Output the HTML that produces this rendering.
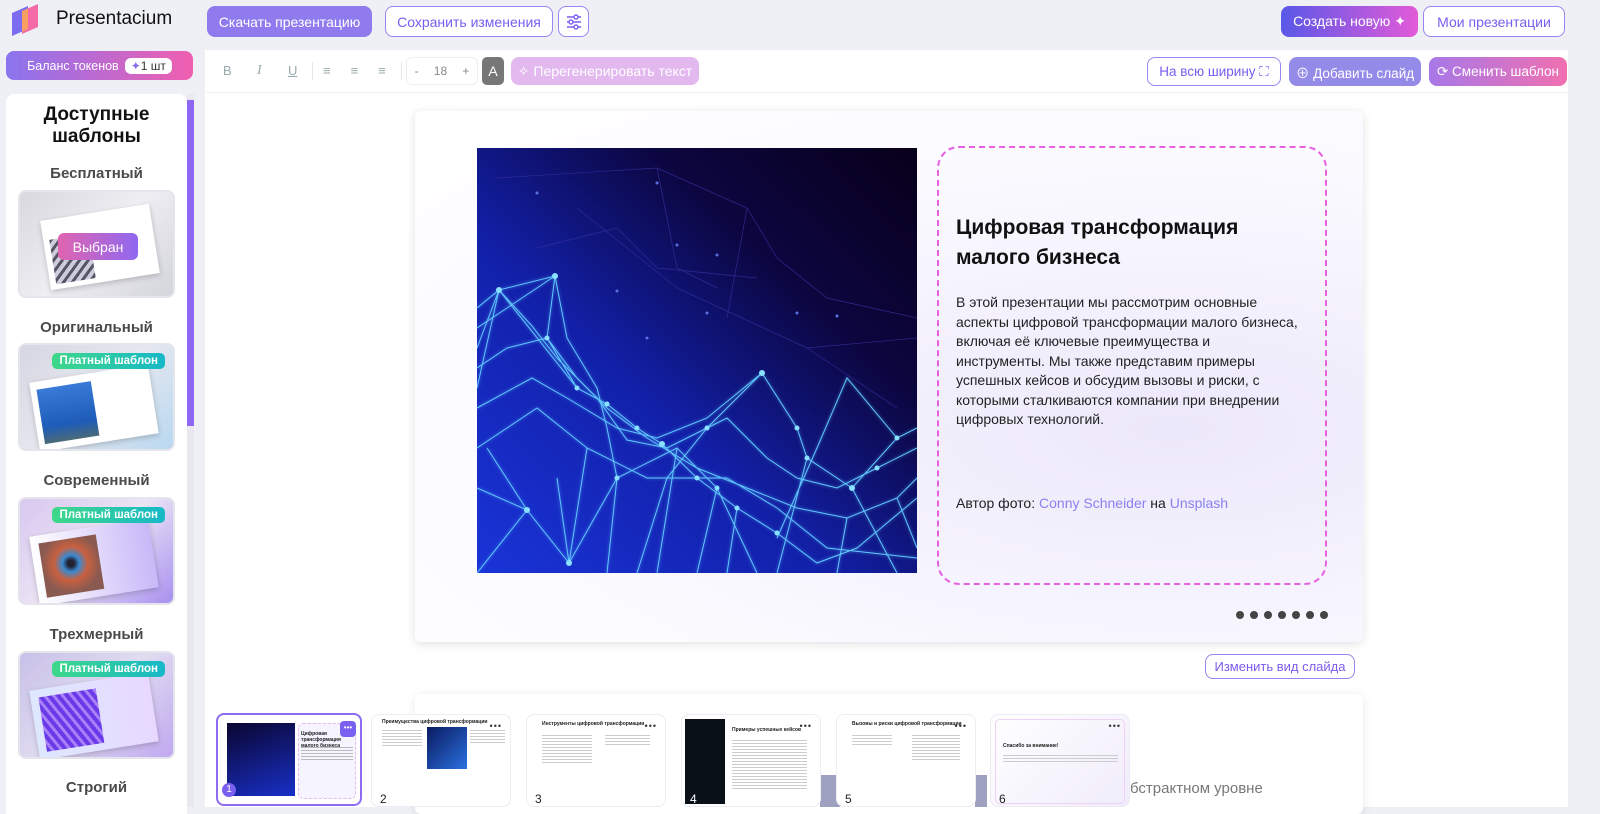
<!DOCTYPE html>
<html><head><meta charset="utf-8">
<style>
*{box-sizing:border-box;margin:0;padding:0}
body{width:1600px;height:807px;overflow:hidden;background:#eef0f6;font-family:"Liberation Sans","Noto Sans CJK SC",sans-serif;position:relative;color:#222}
.abs{position:absolute}
.btn{position:absolute;border-radius:8px;font-size:14px;display:flex;align-items:center;justify-content:center;white-space:nowrap}
.out{border:1.5px solid #9a85f0;color:#7a5cf0;background:#fff}
.tb{color:#9aa;font-size:13px}
.tname{position:absolute;left:6px;width:181px;text-align:center;font-weight:bold;font-size:15px;color:#4a4a4a}
.tcard{position:absolute;left:18px;width:157px;height:108px;border:2px solid #e4e4ec;border-radius:8px;overflow:hidden}
.paid{position:absolute;right:8px;top:8px;background:linear-gradient(90deg,#3fd88a,#17b8c8);color:#fff;font-size:11.5px;padding:2px 7px;border-radius:5px;font-weight:bold}
.th{position:absolute;top:714px;width:140px;height:93px;background:#fff;border:1px solid #ececf2;border-radius:8px;overflow:hidden}
.th .n{position:absolute;left:8px;bottom:0;font-size:12px;color:#222}
.th .d{position:absolute;right:8px;top:6px;font-size:9px;color:#333;letter-spacing:1px}
.ln{position:absolute;height:1.5px;background:#ccc}
</style></head><body>
<svg class="abs" style="left:6px;top:3px" width="38" height="36" viewBox="0 0 38 36"><path d="M6 10 L22 3 L22 26 L6 33Z" fill="#7b6cf0"/><path d="M16 8 L32 1 L32 24 L16 31Z" fill="#f55ca0" opacity=".9"/><path d="M16 8 L22 5.5 L22 26 L16 28.5Z" fill="#f7a060"/></svg>
<div class="abs" style="left:56px;top:8px;font-size:19px;color:#111">Presentacium</div>
<div class="btn" style="left:207px;top:6px;width:165px;height:31px;background:#8f7bee;color:#fff">Скачать презентацию</div>
<div class="btn out" style="left:385px;top:6px;width:168px;height:31px">Сохранить изменения</div>
<div class="btn out" style="left:558px;top:6px;width:31px;height:31px"><svg width="18" height="18" viewBox="0 0 18 18" fill="none" stroke="#7a5cf0" stroke-width="1.4"><path d="M2 4h14M2 9h14M2 14h14"/><circle cx="11" cy="4" r="2" fill="#fff"/><circle cx="6" cy="9" r="2" fill="#fff"/><circle cx="11" cy="14" r="2" fill="#fff"/></svg></div>
<div class="btn" style="left:1281px;top:6px;width:137px;height:31px;background:linear-gradient(90deg,#5a58e8,#e25ad8);color:#fff">Создать новую ✦</div>
<div class="btn out" style="left:1423px;top:6px;width:142px;height:31px">Мои презентации</div>

<div class="btn" style="left:6px;top:51px;width:187px;height:29px;background:linear-gradient(90deg,#8b74ee,#f05fb0);color:#fff;font-size:12.5px">Баланс токенов <span style="background:#fff;color:#333;border-radius:6px;padding:1px 6px;margin-left:6px;font-size:12px"><span style="color:#8b6cf0">✦</span>1 шт</span></div>
<div class="abs" style="left:6px;top:94px;width:181px;height:720px;background:#fff;border-radius:8px 8px 0 0"></div>
<div class="abs" style="left:187px;top:94px;width:7px;height:713px;background:#e8e8ee"></div>
<div class="abs" style="left:187px;top:100px;width:7px;height:326px;background:#8e68f4"></div>
<div class="abs" style="left:6px;top:104px;width:181px;text-align:center;font-size:19px;font-weight:bold;line-height:22px;color:#111">Доступные<br>шаблоны</div>
<div class="tname" style="top:165px">Бесплатный</div>
<div class="tcard" style="top:190px;background:linear-gradient(135deg,#d8d8de,#eeeef3 50%,#d4d4dc)">
 <div class="abs" style="left:25px;top:20px;width:110px;height:70px;background:#fff;transform:rotate(-9deg);box-shadow:0 2px 6px rgba(0,0,0,.2)"><div class="abs" style="left:6px;top:20px;width:40px;height:45px;background:repeating-linear-gradient(135deg,#556 0 3px,#ccd 3px 7px)"></div></div>
 <div class="abs" style="left:38px;top:41px;width:80px;height:27px;border-radius:6px;background:linear-gradient(90deg,#e064b0,#9068f0);color:#fff;font-size:14px;display:flex;align-items:center;justify-content:center">Выбран</div>
</div>
<div class="tname" style="top:319px">Оригинальный</div>
<div class="tcard" style="top:343px;background:linear-gradient(135deg,#d6d6e2,#e6e8f0 50%,#b8d8f0)">
 <div class="abs" style="left:14px;top:28px;width:120px;height:70px;background:#fff;transform:rotate(-9deg);box-shadow:0 2px 6px rgba(0,0,0,.2)"><div class="abs" style="left:6px;top:8px;width:55px;height:55px;background:linear-gradient(#3a7ad8,#1e5cb8 70%,#4a6a78)"></div></div>
 <div class="paid">Платный шаблон</div>
</div>
<div class="tname" style="top:472px">Современный</div>
<div class="tcard" style="top:497px;background:linear-gradient(135deg,#d8c8f0,#ece4f4 50%,#a890f0)">
 <div class="abs" style="left:14px;top:28px;width:120px;height:70px;background:linear-gradient(90deg,#fff,#c8b8f8);transform:rotate(-9deg);box-shadow:0 2px 6px rgba(0,0,0,.2)"><div class="abs" style="left:8px;top:8px;width:58px;height:55px;background:radial-gradient(circle at 50% 45%,#223 8%,#3a8ad0 20%,#c86040 40%,#8a5a50 70%)"></div></div>
 <div class="paid">Платный шаблон</div>
</div>
<div class="tname" style="top:626px">Трехмерный</div>
<div class="tcard" style="top:651px;background:linear-gradient(135deg,#c8c0e8,#e0dcf0 50%,#c0a8f0)">
 <div class="abs" style="left:14px;top:28px;width:120px;height:70px;background:linear-gradient(90deg,#dde8ff,#e8d8ff);transform:rotate(-9deg);box-shadow:0 2px 6px rgba(0,0,0,.2)"><div class="abs" style="left:8px;top:8px;width:58px;height:55px;background:repeating-linear-gradient(60deg,#6a3ae8 0 4px,#a880f8 4px 7px)"></div></div>
 <div class="paid">Платный шаблон</div>
</div>
<div class="tname" style="top:779px">Строгий</div>

<div class="abs" style="left:205px;top:50px;width:1363px;height:757px;background:#fff"></div>
<div class="abs" style="left:205px;top:92px;width:1363px;height:1px;background:#f0f0f4"></div>
<div class="abs tb" style="left:223px;top:63px">B</div>
<div class="abs tb" style="left:257px;top:63px;font-style:italic;font-family:'Liberation Serif',serif;font-size:14px">I</div>
<div class="abs tb" style="left:288px;top:63px;text-decoration:underline">U</div>
<div class="abs" style="left:312px;top:62px;width:1px;height:18px;background:#e6e6ea"></div>
<div class="abs tb" style="left:323px;top:63px;letter-spacing:20px">≡≡≡</div>
<div class="abs" style="left:401px;top:62px;width:1px;height:18px;background:#e6e6ea"></div>
<div class="abs" style="left:406px;top:57px;width:72px;height:28px;border:1px solid #eee;border-radius:6px;font-size:12px;color:#888;display:flex;justify-content:space-around;align-items:center"><span>-</span><span>18</span><span>+</span></div>
<div class="btn" style="left:482px;top:57px;width:22px;height:28px;border-radius:5px;background:#777;color:#fff;font-size:14px">A</div>
<div class="btn" style="left:511px;top:57px;width:188px;height:28px;background:#e2b8ee;color:#fff;font-size:14px">✧ Перегенерировать текст</div>
<div class="btn out" style="left:1147px;top:57px;width:134px;height:29px;font-size:13.5px">На всю ширину ⛶</div>
<div class="btn" style="left:1289px;top:57px;width:132px;height:29px;background:#948ae8;color:#fff;font-size:13.5px">⊕ Добавить слайд</div>
<div class="btn" style="left:1429px;top:57px;width:138px;height:29px;background:linear-gradient(90deg,#a878e8,#f070b0);color:#fff;font-size:13.5px">⟳ Сменить шаблон</div>

<div class="abs" style="left:415px;top:111px;width:948px;height:531px;border-radius:6px;background:radial-gradient(ellipse at 80% 60%,#ece8fb,#fbfaff 60%,#fff);box-shadow:0 2px 10px rgba(0,0,0,.12)"></div>
<svg class="abs" style="left:477px;top:148px" width="440" height="425" viewBox="0 0 440 425">
<defs><linearGradient id="g" x1="1" y1="0" x2="0" y2="1"><stop offset="0" stop-color="#08001a"/><stop offset=".3" stop-color="#0c0640"/><stop offset=".6" stop-color="#1220a8"/><stop offset="1" stop-color="#1a34d8"/></linearGradient>
<filter id="gl"><feGaussianBlur stdDeviation="1.5"/></filter></defs>
<rect width="440" height="425" fill="url(#g)"/>
<g stroke="#3a30a0" stroke-width=".7" fill="none" opacity=".8"><path d="M20 30 L180 20 L270 60 L300 110 L350 150 L440 170 M60 100 L140 80 L180 120 L280 130 M100 60 L200 140 L330 200 L440 190 M180 20 L200 120 L240 140 M270 60 L250 170 M330 200 L420 260"/></g>
<g id="net" stroke="#60c8ff" stroke-width="1" fill="none">
<path d="M0 160 L22 142 L78 128 L70 190 L100 240 L130 256 L160 280 L185 296 L220 330 L260 360 L300 385 L340 415 L380 400 L440 350"/>
<path d="M22 142 L55 178 L80 210 L120 250 L150 292 L190 300 L230 280 L250 270 L290 310 L320 330 L360 340 L400 320 L440 300"/>
<path d="M0 220 L30 200 L70 190 L100 230 L130 260 L170 290 L220 320 L270 340 L320 360 L370 370 L420 350 L440 330"/>
<path d="M0 260 L55 230 L90 250 L140 280 L180 290 L230 270 L285 225 L320 280 L330 310 L375 340 L420 290 L440 280"/>
<path d="M78 128 L90 190 L120 240 L130 280 L140 330 L130 425 M22 142 L0 200 M50 362 L0 425 M50 362 L92 415 L140 330 L200 300 L240 340 L280 425 M240 340 L220 425 M330 310 L300 425 M375 340 L420 425 M285 225 L230 280 L190 330 L160 425 M300 390 L340 300 L370 230 L420 290 M50 362 L10 300 M92 415 L80 330 M0 180 L78 128 M0 240 L22 142 M22 142 L100 240 M260 360 L250 425 M370 370 L360 425 M420 350 L440 400"/>
<path d="M0 300 L60 260 L110 300 L170 330 L250 330 L300 360 L350 400 L440 410 M0 340 L50 362 M110 300 L92 415 M200 300 L180 425"/>
</g>
<use href="#net" filter="url(#gl)" opacity=".7"/>
<g fill="#8ae0ff"><circle cx="22" cy="142" r="3"/><circle cx="78" cy="128" r="3"/><circle cx="70" cy="190" r="2.5"/><circle cx="100" cy="240" r="2.5"/><circle cx="130" cy="256" r="2.5"/><circle cx="185" cy="296" r="3"/><circle cx="220" cy="330" r="2.5"/><circle cx="285" cy="225" r="3"/><circle cx="320" cy="280" r="2.5"/><circle cx="375" cy="340" r="3"/><circle cx="420" cy="290" r="2.5"/><circle cx="50" cy="362" r="3"/><circle cx="92" cy="415" r="3"/><circle cx="140" cy="330" r="2.5"/><circle cx="240" cy="340" r="2.5"/><circle cx="330" cy="310" r="2.5"/><circle cx="260" cy="360" r="2.5"/><circle cx="160" cy="280" r="2.5"/><circle cx="230" cy="280" r="2.5"/><circle cx="300" cy="385" r="2.5"/><circle cx="400" cy="320" r="2.5"/></g>
<g fill="#5a70e0"><circle cx="200" cy="97" r="1.5"/><circle cx="240" cy="107" r="1.5"/><circle cx="320" cy="165" r="1.5"/><circle cx="360" cy="168" r="1.5"/><circle cx="140" cy="143" r="1.5"/><circle cx="60" cy="45" r="1.5"/><circle cx="180" cy="35" r="1.5"/><circle cx="230" cy="165" r="1.5"/><circle cx="170" cy="190" r="1.5"/></g>
</svg>
<div class="abs" style="left:937px;top:146px;width:390px;height:439px;border:2px dashed #e860e0;border-radius:22px"></div>
<div class="abs" style="left:956px;top:213px;font-size:21px;font-weight:bold;line-height:30px;color:#111">Цифровая трансформация<br>малого бизнеса</div>
<div class="abs" style="left:956px;top:293px;font-size:14px;line-height:19.5px;color:#222;white-space:nowrap">В этой презентации мы рассмотрим основные<br>аспекты цифровой трансформации малого бизнеса,<br>включая её ключевые преимущества и<br>инструменты. Мы также представим примеры<br>успешных кейсов и обсудим вызовы и риски, с<br>которыми сталкиваются компании при внедрении<br>цифровых технологий.</div>
<div class="abs" style="left:956px;top:495px;font-size:14px;color:#222">Автор фото: <span style="color:#8a80f0">Conny Schneider</span> на <span style="color:#8a80f0">Unsplash</span></div>
<div class="abs" style="left:1235px;top:610px;font-size:0">
<svg width="95" height="10"><g fill="#444"><circle cx="5" cy="5" r="4"/><circle cx="19" cy="5" r="4"/><circle cx="33" cy="5" r="4"/><circle cx="47" cy="5" r="4"/><circle cx="61" cy="5" r="4"/><circle cx="75" cy="5" r="4"/><circle cx="89" cy="5" r="4"/></g></svg></div>
<div class="btn out" style="left:1205px;top:654px;width:150px;height:25px;font-size:13px">Изменить вид слайда</div>
<div class="abs" style="left:415px;top:694px;width:948px;height:120px;border-radius:6px;background:#fff;box-shadow:0 2px 10px rgba(0,0,0,.1)"></div>
<div class="abs" style="left:820px;top:775px;width:20px;height:32px;background:#9ea2c0"></div>
<div class="abs" style="left:975px;top:775px;width:12px;height:32px;background:#9ea2c0"></div>
<div class="abs" style="left:1130px;top:780px;font-size:15px;color:#777">бстрактном уровне</div>

<div class="th" style="left:216px;top:713px;width:146px;border:2px solid #8e6cf0">
 <div class="abs" style="left:9px;top:8px;width:68px;height:73px;background:linear-gradient(160deg,#0a0530,#1830c8)"></div>
 <div class="abs" style="left:80px;top:8px;width:58px;height:76px;border:1px dashed #e8b8f0;border-radius:5px;background:#f6f4ff"></div>
 <div class="abs" style="left:83px;top:16px;font-size:5px;font-weight:bold">Цифровая трансформация<br>малого бизнеса</div>
 <div class="ln" style="left:83px;top:32px;width:52px;height:14px;background:repeating-linear-gradient(#bbb 0 1px,transparent 1px 3px)"></div>
 <div class="abs" style="left:122px;top:6px;width:16px;height:16px;border-radius:4px;background:#7a60f0;color:#fff;font-size:8px;text-align:center;line-height:14px">•••</div>
 <div class="abs" style="left:4px;top:68px;width:14px;height:14px;border-radius:50%;background:#7a60f0;color:#fff;font-size:10px;text-align:center;line-height:14px">1</div>
</div>
<div class="th" style="left:371px">
 <div class="abs" style="left:10px;top:4px;font-size:5px;font-weight:bold">Преимущества цифровой трансформации</div>
 <div class="ln" style="left:10px;top:15px;width:40px;height:18px;background:repeating-linear-gradient(#ccc 0 1px,transparent 1px 3px)"></div>
 <div class="abs" style="left:55px;top:12px;width:40px;height:42px;background:linear-gradient(135deg,#0a1a60,#2a70e0)"></div>
 <div class="ln" style="left:98px;top:15px;width:35px;height:15px;background:repeating-linear-gradient(#ccc 0 1px,transparent 1px 3px)"></div>
 <div class="d">•••</div><div class="n">2</div>
</div>
<div class="th" style="left:526px">
 <div class="abs" style="left:15px;top:6px;font-size:5px;font-weight:bold">Инструменты цифровой трансформации</div>
 <div class="ln" style="left:15px;top:20px;width:50px;height:28px;background:repeating-linear-gradient(#ccc 0 1px,transparent 1px 3px)"></div>
 <div class="ln" style="left:78px;top:20px;width:45px;height:10px;background:repeating-linear-gradient(#ccc 0 1px,transparent 1px 3px)"></div>
 <div class="d">•••</div><div class="n">3</div>
</div>
<div class="th" style="left:681px">
 <div class="abs" style="left:3px;top:4px;width:40px;height:85px;background:#0a1018"></div>
 <div class="abs" style="left:50px;top:12px;font-size:5px;font-weight:bold">Примеры успешных кейсов</div>
 <div class="ln" style="left:50px;top:25px;width:75px;height:50px;background:repeating-linear-gradient(#ccc 0 1px,transparent 1px 3px)"></div>
 <div class="d">•••</div><div class="n" style="color:#fff">4</div>
</div>
<div class="th" style="left:836px">
 <div class="abs" style="left:15px;top:6px;font-size:5px;font-weight:bold">Вызовы и риски цифровой трансформации</div>
 <div class="ln" style="left:15px;top:20px;width:40px;height:12px;background:repeating-linear-gradient(#ccc 0 1px,transparent 1px 3px)"></div>
 <div class="ln" style="left:75px;top:20px;width:48px;height:26px;background:repeating-linear-gradient(#ccc 0 1px,transparent 1px 3px)"></div>
 <div class="d">•••</div><div class="n">5</div>
</div>
<div class="th" style="left:990px;background:linear-gradient(135deg,#fff,#f0ecfb)">
 <div class="abs" style="left:4px;top:4px;width:130px;height:85px;border:1px solid #f0d0f4;border-radius:5px"></div>
 <div class="abs" style="left:12px;top:28px;font-size:5px;font-weight:bold">Спасибо за внимание!</div>
 <div class="ln" style="left:12px;top:40px;width:115px;height:9px;background:repeating-linear-gradient(#ccc 0 1px,transparent 1px 3px)"></div>
 <div class="d">•••</div><div class="n">6</div>
</div>
</body></html>
